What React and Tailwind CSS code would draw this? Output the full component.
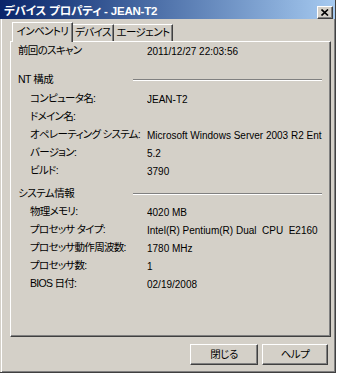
export default function App() {
  const raised =
    "border-t border-l border-t-white border-l-white border-r border-b border-r-[#404040] border-b-[#404040] shadow-[inset_-1px_-1px_0_#808080]";
  const Row = ({ label, value, indent }) => (
    <div className="flex items-center h-[18px] whitespace-nowrap">
      <div className={indent ? "w-[129px] pl-[12px] shrink-0 tracking-[-0.7px]" : "w-[129px] shrink-0 tracking-[-0.7px]"}>{label}</div>
      <div className="overflow-hidden w-[178px] text-[10px]">{value}</div>
    </div>
  );
  const Header = ({ label }) => (
    <div className="flex items-center h-[18px] whitespace-nowrap">
      <div className="w-[115px] shrink-0 tracking-[-0.5px]">{label}</div>
      <div className="w-[189px] h-[2px] border-t border-t-[#808080] border-b border-b-white" />
    </div>
  );
  return (
    <div className="w-[340px] h-[376px] bg-white overflow-hidden font-['Liberation_Sans','Noto_Sans_CJK_JP',sans-serif] [font-feature-settings:'palt'] text-[10.5px] text-black">
      <div className="w-[336px] h-[373px] bg-[#d4d0c8] flex flex-col border-r border-b border-r-[#404040] border-b-[#404040] shadow-[inset_1px_0_0_#d4d0c8,inset_2px_0_0_#ffffff,inset_-1px_-1px_0_#808080]">
        {/* title bar */}
        <div className="h-[19px] flex items-center pt-[5px] pl-[4px] pr-[2px] bg-linear-to-r from-[#0a246a] to-[#a6caf0]">
          <div className="flex-1 text-white font-bold text-[11.5px] tracking-[-0.2px]">デバイス プロパティ - JEAN-T2</div>
          <div className={"w-[16px] h-[13px] bg-[#d4d0c8] flex items-center justify-center " + raised}>
            <svg width="8" height="7" viewBox="0 0 8 7">
              <path d="M0.5 0.5 L7 6.5 M7 0.5 L0.5 6.5" stroke="#000" strokeWidth="1.6" />
            </svg>
          </div>
        </div>
        {/* tabs */}
        <div className="ml-[12px] mt-[3px] flex items-end h-[19px] relative z-10 tracking-[-0.6px]">
          <div className="w-[61px] h-[20px] -mb-[1px] bg-[#d4d0c8] border-t border-l border-t-white border-l-white border-r border-r-[#404040] shadow-[inset_-1px_0_0_#808080] flex items-center justify-center pb-[2px]">
            インベントリ
          </div>
          <div className="w-[41px] h-[17px] border-t border-t-white border-r border-r-[#404040] shadow-[inset_-1px_0_0_#808080] flex items-center justify-center">
            デバイス
          </div>
          <div className="w-[59px] h-[17px] border-t border-t-white border-r border-r-[#404040] shadow-[inset_-1px_0_0_#808080] flex items-center justify-center">
            エージェント
          </div>
        </div>
        {/* panel */}
        <div className="ml-[10px] w-[321px] h-[296px] border-t border-l border-t-white border-l-white border-r border-b border-r-[#404040] border-b-[#404040] shadow-[inset_-1px_-1px_0_#808080] pl-[7px] overflow-hidden">
          <Row label="前回のスキャン" value="2011/12/27 22:03:56" />
          <div className="h-[11px]" />
          <Header label="NT 構成" />
          <div className="h-[1px]" />
          <Row indent label="コンピュータ名:" value="JEAN-T2" />
          <Row indent label="ドメイン名:" value="" />
          <Row indent label="オペレーティング システム:" value="Microsoft Windows Server 2003 R2 Ent" />
          <Row indent label="バージョン:" value="5.2" />
          <Row indent label="ビルド:" value="3790" />
          <div className="h-[5px]" />
          <Header label="システム情報" />
          <Row indent label="物理メモリ:" value="4020 MB" />
          <Row indent label="プロセッサ タイプ:" value={"Intel(R) Pentium(R) Dual\u00a0 CPU\u00a0 E2160"} />
          <Row indent label="プロセッサ動作周波数:" value="1780 MHz" />
          <Row indent label="プロセッサ数:" value="1" />
          <Row indent label="BIOS 日付:" value="02/19/2008" />
        </div>
        {/* buttons */}
        <div className="mt-[7px] ml-[190px] flex gap-[4px] tracking-[-0.5px]">
          <div className={"w-[68px] h-[21px] flex items-center justify-center " + raised}>閉じる</div>
          <div className={"w-[66px] h-[21px] flex items-center justify-center " + raised}>ヘルプ</div>
        </div>
      </div>
    </div>
  );
}
